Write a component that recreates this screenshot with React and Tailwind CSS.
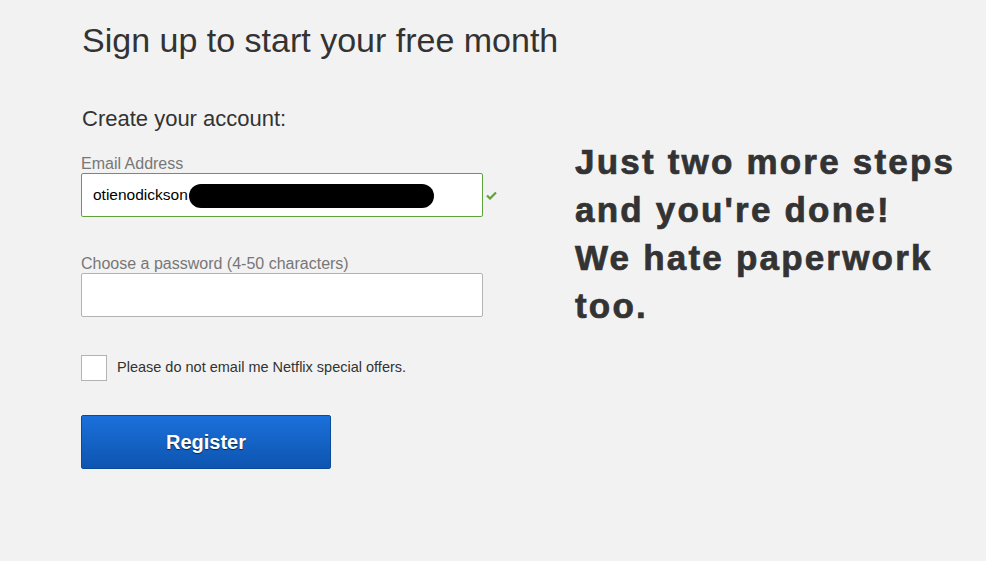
export default function App() {
  return (
    <div className="w-[986px] h-[561px] bg-[#f2f2f2] overflow-hidden flex font-['Liberation_Sans',Arial,sans-serif] text-[#333]">
      <div className="pl-[81px] pt-[19px] w-[575px] shrink-0 flex flex-col">
        <h1 className="text-[34px] leading-[42px] text-[#333] ml-[1px]">Sign up to start your free month</h1>
        <div className="mt-[45px] text-[22px] leading-[26px] ml-[1px]">Create your account:</div>
        <label className="mt-[22px] text-[16px] leading-[20px] text-[#777]">Email Address</label>
        <div className="mt-[-1px] flex items-center">
          <div className="relative w-[402px] h-[44px] bg-white border border-[#5fa23a] rounded-[2px] flex items-center pl-[11px] text-[15.5px] text-black">
            <span>otienodickson</span>
            <div className="absolute left-[107px] top-[10px] w-[245px] h-[24px] bg-black rounded-[12px]" />
          </div>
          <svg className="ml-[3px]" width="11" height="9" viewBox="0 0 11 9">
            <path d="M1 4.5 L4 7.5 L10 1.5" stroke="#5fa23a" strokeWidth="2.2" fill="none" />
          </svg>
        </div>
        <label className="mt-[37px] text-[16px] leading-[20px] text-[#777]">Choose a password (4-50 characters)</label>
        <div className="mt-[-1px] w-[402px] h-[44px] bg-white border border-[#b3b3b3] rounded-[2px]" />
        <div className="mt-[38px] flex items-center">
          <div className="w-[26px] h-[26px] bg-white border border-[#b3b3b3]" />
          <span className="ml-[10px] text-[14.5px] text-[#333]">Please do not email me Netflix special offers.</span>
        </div>
        <button className="mt-[34px] w-[250px] h-[54px] rounded-[2px] border border-[#0a4a9a] bg-gradient-to-b from-[#1b70db] to-[#0d55b0] text-white text-[20px] font-bold [text-shadow:0_1px_1px_rgba(0,0,0,0.6)]">
          Register
        </button>
      </div>
      <div className="pt-[138px] text-[35px] leading-[48px] font-bold tracking-[2.2px] text-[#333] [-webkit-text-stroke:0.7px_#333]">
        Just two more steps<br />and you're done!<br />We hate paperwork<br />too.
      </div>
    </div>
  );
}
